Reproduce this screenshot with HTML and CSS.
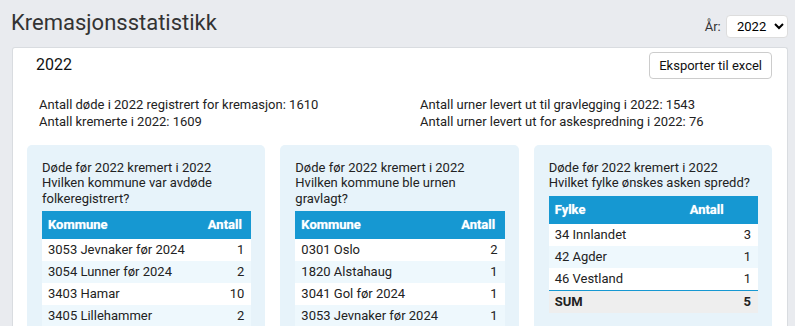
FILE: index.html
```html
<!DOCTYPE html>
<html lang="no">

<head>
    <meta charset="UTF-8">
    <meta name="viewport" content="width=device-width, initial-scale=1.0">
    <title>Kremasjonsstatistikk</title>
    <link rel="stylesheet" href="styles.css">
</head>

<body>
    <!-- Topp -->
    <header class="topp">
        <h1>Kremasjonsstatistikk</h1>
        <label class="aarvalg">År:
            <select>
                <option>2022</option>
                <option>2021</option>
            </select>
        </label>
    </header>

    <!-- Statistikk -->
    <section class="panel">
        <div class="panel-hode">
            <h2>2022</h2>
            <button class="knapp">Eksporter til excel</button>
        </div>

        <div class="tall">
            <div>
                Antall døde i 2022 registrert for kremasjon: 1610<br>
                Antall kremerte i 2022: 1609
            </div>
            <div>
                Antall urner levert ut til gravlegging i 2022: 1543<br>
                Antall urner levert ut for askespredning i 2022: 76
            </div>
        </div>

        <div class="kort-rad">
            <div class="kort">
                <p>Døde før 2022 kremert i 2022<br>Hvilken kommune var avdøde folkeregistrert?</p>
                <table>
                    <tr><th>Kommune</th><th>Antall</th></tr>
                    <tr><td>3053 Jevnaker før 2024</td><td>1</td></tr>
                    <tr><td>3054 Lunner før 2024</td><td>2</td></tr>
                    <tr><td>3403 Hamar</td><td>10</td></tr>
                    <tr><td>3405 Lillehammer</td><td>2</td></tr>
                </table>
            </div>
            <div class="kort">
                <p>Døde før 2022 kremert i 2022<br>Hvilken kommune ble urnen gravlagt?</p>
                <table>
                    <tr><th>Kommune</th><th>Antall</th></tr>
                    <tr><td>0301 Oslo</td><td>2</td></tr>
                    <tr><td>1820 Alstahaug</td><td>1</td></tr>
                    <tr><td>3041 Gol før 2024</td><td>1</td></tr>
                    <tr><td>3053 Jevnaker før 2024</td><td>1</td></tr>
                </table>
            </div>
            <div class="kort">
                <p>Døde før 2022 kremert i 2022<br>Hvilket fylke ønskes asken spredd?</p>
                <table>
                    <tr><th>Fylke</th><th>Antall</th></tr>
                    <tr><td>34 Innlandet</td><td>3</td></tr>
                    <tr><td>42 Agder</td><td>1</td></tr>
                    <tr><td>46 Vestland</td><td>1</td></tr>
                    <tr class="sum"><td>SUM</td><td>5</td></tr>
                </table>
            </div>
        </div>
    </section>
</body>

</html>
```

FILE: styles.css
```css
/* Generelt */
body {
    font-family: Roboto, Arial, sans-serif;
    margin: 0;
    padding: 0 7px 0 12px;
    background-color: #e9ebef;
    color: #222;
    height: 326px;
    overflow: hidden;
}

/* Topp */
.topp {
    display: flex;
    justify-content: space-between;
    align-items: flex-start;
    height: 47px;
}

.topp h1 {
    margin: 9px 0 0 -1px;
    font-size: 22px;
    font-weight: normal;
    line-height: 28px;
    color: #333;
}

.aarvalg {
    margin-top: 15px;
    font-size: 13px;
    color: #333;
}

.aarvalg select {
    font-family: Roboto, Arial, sans-serif;
    font-size: 13px;
    height: 23px;
    padding: 0 4px 0 6px;
    margin-left: 2px;
    border: 1px solid #ddd;
    border-radius: 4px;
    background-color: white;
    color: #000;
}

/* Panel */
.panel {
    background-color: white;
    border: 1px solid #d9dce0;
    border-bottom: none;
    border-radius: 3px 3px 0 0;
    padding: 4px 15px 0 14px;
    height: 278px;
    overflow: hidden;
}

.panel-hode {
    display: flex;
    justify-content: space-between;
    align-items: flex-start;
}

.panel-hode h2 {
    margin: 3px 0 0 9px;
    font-size: 16px;
    font-weight: normal;
    line-height: 19px;
    color: #111;
}

.knapp {
    font-family: Roboto, Arial, sans-serif;
    font-size: 13px;
    height: 27px;
    padding: 0 9px;
    border: 1px solid #ccc;
    border-radius: 4px;
    background-color: white;
    color: #111;
}

.tall {
    display: grid;
    grid-template-columns: 381px 1fr;
    margin-top: 17px;
    padding-left: 12px;
    font-size: 13px;
    line-height: 17px;
    color: #222;
}

/* Kort */
.kort-rad {
    display: grid;
    grid-template-columns: repeat(3, 1fr);
    gap: 15px;
    margin-top: 15px;
}

.kort {
    background-color: #e7f3fa;
    border-radius: 5px;
    padding: 15px 14px 13px 15px;
}

.kort p {
    margin: 0 0 5px 0;
    font-size: 13px;
    line-height: 15.4px;
    color: #222;
}

table {
    width: 100%;
    border-collapse: collapse;
    font-size: 13px;
}

th {
    background-color: #1698d2;
    color: white;
    text-align: left;
    padding: 6px 6px;
    line-height: 16px;
    text-shadow: 0 0 1px rgba(255, 255, 255, 0.6);
}

td {
    background-color: white;
    padding: 3px 6px;
    line-height: 16px;
    color: #222;
}

td:last-child {
    text-align: right;
    padding-right: 7px;
}

tr:nth-child(odd) td {
    background-color: #eef8fd;
}

tr.sum td {
    background-color: #eeeeee;
    border-top: 1px solid #1698d2;
    font-weight: bold;
}
```
